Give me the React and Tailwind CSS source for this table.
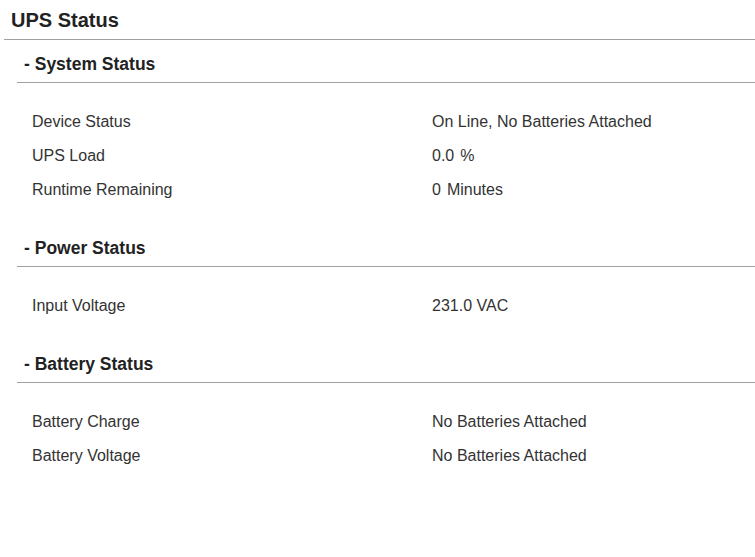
import React from 'react';

const sections = [
  {
    title: 'System Status',
    rows: [
      ['Device Status', 'On Line, No Batteries Attached'],
      ['UPS Load', '0.0', '%'],
      ['Runtime Remaining', '0', 'Minutes'],
    ],
  },
  {
    title: 'Power Status',
    rows: [['Input Voltage', '231.0 VAC']],
  },
  {
    title: 'Battery Status',
    rows: [
      ['Battery Charge', 'No Batteries Attached'],
      ['Battery Voltage', 'No Batteries Attached'],
    ],
  },
];

const App = () => {
  return (
    <div className="min-h-screen bg-white pl-[4px] font-['Liberation_Sans',Arial,sans-serif] text-[#222]">
      {/* Page title */}
      <h1 className="box-border h-[40px] border-b border-[#a0a0a0] pl-[7px] pt-[1px] text-[20px] font-bold leading-[38px]">
        UPS Status
      </h1>

      {sections.map((section) => (
        <div key={section.title} className="ml-[13px] pb-[17px]">
          {/* Section header */}
          <h2 className="box-border h-[43px] border-b border-[#a0a0a0] pl-[7px] pt-[7px] text-[17.5px] font-bold leading-[34px]">
            - {section.title}
          </h2>

          {/* Rows */}
          <div className="pt-[22px] pl-[15px] text-[16px] text-[#333]">
            {section.rows.map(([label, value, unit]) => (
              <div key={label} className="flex h-[34px] items-center">
                <span className="w-[400px] shrink-0">{label}</span>
                <span>{value}</span>
                {unit && <span className="ml-[6px]">{unit}</span>}
              </div>
            ))}
          </div>
        </div>
      ))}
    </div>
  );
};

export default App;
